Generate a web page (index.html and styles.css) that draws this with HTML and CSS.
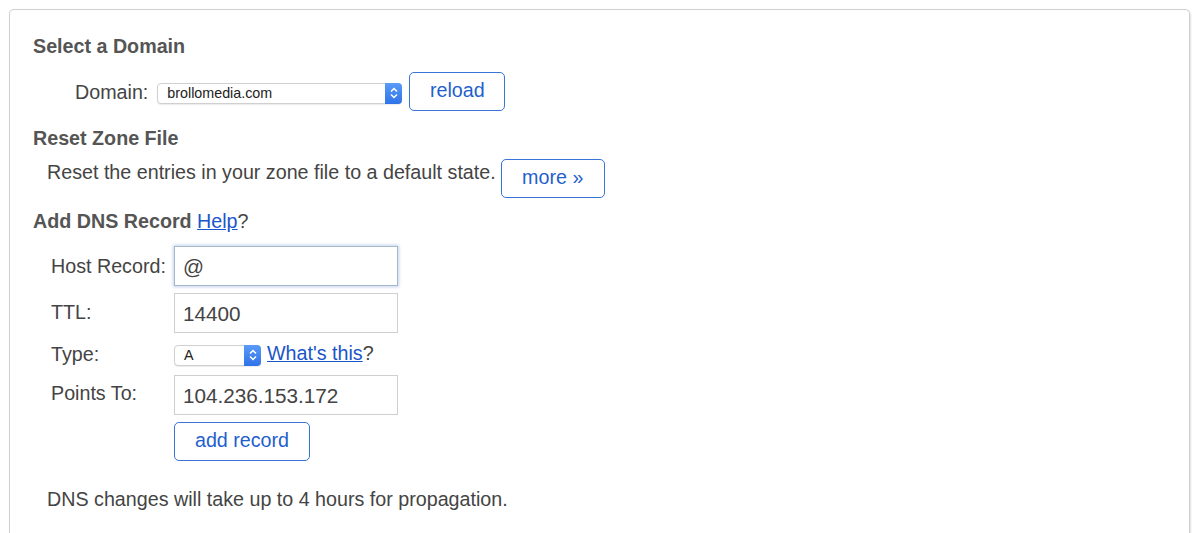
FILE: index.html
```html
<!DOCTYPE html>
<html>
<head>
<meta charset="utf-8">
<link rel="stylesheet" href="styles.css">
</head>
<body>
<div class="panel">
  <h3 class="heading h-select">Select a Domain</h3>
  <div class="domain-row">
    <span class="label-domain">Domain:</span>
    <div class="select select-domain"><span class="select-text">brollomedia.com</span><span class="stepper"><svg width="10" height="14" viewBox="0 0 10 14"><path d="M2 5.5 L5 2.5 L8 5.5 M2 8.5 L5 11.5 L8 8.5" fill="none" stroke="#fff" stroke-width="1.5"/></svg></span></div>
    <button class="btn btn-reload">reload</button>
  </div>
  <h3 class="heading h-reset">Reset Zone File</h3>
  <div class="reset-row">
    <span class="reset-text">Reset the entries in your zone file to a default state.</span>
    <button class="btn btn-more">more »</button>
  </div>
  <h3 class="heading h-add">Add DNS Record <a class="link" href="#">Help</a><span class="q">?</span></h3>
  <div class="form">
    <div class="row row-host">
      <span class="flabel">Host Record:</span>
      <div class="input focused">@</div>
    </div>
    <div class="row row-ttl">
      <span class="flabel">TTL:</span>
      <div class="input">14400</div>
    </div>
    <div class="row row-type">
      <span class="flabel">Type:</span>
      <div class="select select-type"><span class="select-text">A</span><span class="stepper"><svg width="10" height="14" viewBox="0 0 10 14"><path d="M2 5.5 L5 2.5 L8 5.5 M2 8.5 L5 11.5 L8 8.5" fill="none" stroke="#fff" stroke-width="1.5"/></svg></span></div>
      <span class="whats"><a class="link" href="#">What's this</a>?</span>
    </div>
    <div class="row row-points">
      <span class="flabel">Points To:</span>
      <div class="input">104.236.153.172</div>
    </div>
    <div class="row row-add">
      <span class="flabel"></span>
      <button class="btn btn-add">add record</button>
    </div>
  </div>
  <p class="note">DNS changes will take up to 4 hours for propagation.</p>
</div>
</body>
</html>
```

FILE: styles.css
```css
html, body {
  margin: 0;
  padding: 0;
  background: #fff;
  height: 533px;
  overflow: hidden;
}
body {
  font-family: "Liberation Sans", Arial, sans-serif;
  color: #444;
  padding: 9px 10px 0 9px;
}
.panel {
  border: 1px solid #cfcfcf;
  border-bottom: none;
  border-radius: 5px 5px 0 0;
  box-shadow: 1px 1px 2px rgba(0,0,0,0.12);
  height: 540px;
  padding: 0 0 0 23px;
  box-sizing: border-box;
}
.heading {
  margin: 0;
  font-size: 19.7px;
  font-weight: bold;
  color: #555;
  line-height: 22px;
}
.h-select { padding-top: 25px; }
.domain-row {
  display: flex;
  align-items: center;
  margin-top: 15px;
  padding-left: 42px;
  height: 39px;
}
.label-domain {
  font-size: 19.7px;
  line-height: 22px;
  color: #444;
  margin-right: 9px;
}
.select {
  display: flex;
  align-items: center;
  border: 1px solid #d0d0d0;
  border-radius: 4px;
  background: #fff;
  box-shadow: 0 1px 1px rgba(0,0,0,0.08);
  box-sizing: border-box;
  height: 21px;
  position: relative;
}
.select-domain { width: 245px; margin-top: 3px; }
.select-text {
  flex: 1;
  font-size: 14.3px;
  line-height: 19px;
  color: #222;
  padding-left: 9px;
}
.stepper {
  width: 17px;
  height: 21px;
  margin: -1px -1px -1px 0;
  background: linear-gradient(#5a9bf6, #2f73e8);
  border-radius: 0 4px 4px 0;
  display: flex;
  align-items: center;
  justify-content: center;
}
.btn {
  font-family: "Liberation Sans", Arial, sans-serif;
  font-size: 19.7px;
  line-height: 22px;
  color: #1f5fcc;
  background: #fff;
  border: 1px solid #3a74d6;
  border-radius: 5px;
  height: 39px;
  padding: 0 0 3px 0;
  box-sizing: border-box;
}
.btn-reload { width: 96px; margin-left: 7px; }
.h-reset { margin-top: 16px; }
.reset-row {
  display: flex;
  align-items: flex-start;
  padding-left: 14px;
  margin-top: 11px;
}
.reset-text {
  font-size: 19.7px;
  line-height: 22px;
  color: #444;
  margin-top: 1px;
}
.btn-more { width: 104px; margin-left: 5px; margin-top: -1px; }
.h-add { margin-top: 12px; }
.link {
  color: #1a55c9;
  text-decoration: underline;
  font-weight: normal;
}
.q { font-weight: normal; color: #444; }
.form {
  margin-top: 14px;
  padding-left: 18px;
}
.row {
  display: flex;
  align-items: center;
}
.flabel {
  width: 123px;
  font-size: 19.7px;
  line-height: 22px;
  color: #444;
}
.input {
  width: 224px;
  height: 40px;
  border: 1px solid #cfcfcf;
  box-sizing: border-box;
  font-size: 20.7px;
  line-height: 24px;
  color: #444;
  padding-left: 8px;
  display: flex;
  align-items: center;
  padding-top: 1px;
}
.input.focused {
  border-color: #a8b8cc;
  box-shadow: 0 0 3px 1px rgba(90,130,200,0.35);
}
.row-ttl { margin-top: 7px; }
.row-ttl .flabel { position: relative; top: -1px; }
.row-type { margin-top: 11px; height: 22px; }
.row-type .flabel { position: relative; top: -1px; }
.select-type { width: 87px; }
.whats { font-size: 19.7px; line-height: 22px; color: #444; margin-left: 6px; position: relative; top: -2px; }
.row-points { margin-top: 9px; }
.row-points .flabel { position: relative; top: -2px; }
.row-add { margin-top: 7px; }
.btn-add { width: 136px; }
.note {
  margin: 27px 0 0 14px;
  font-size: 19.7px;
  line-height: 22px;
  color: #444;
}
```
